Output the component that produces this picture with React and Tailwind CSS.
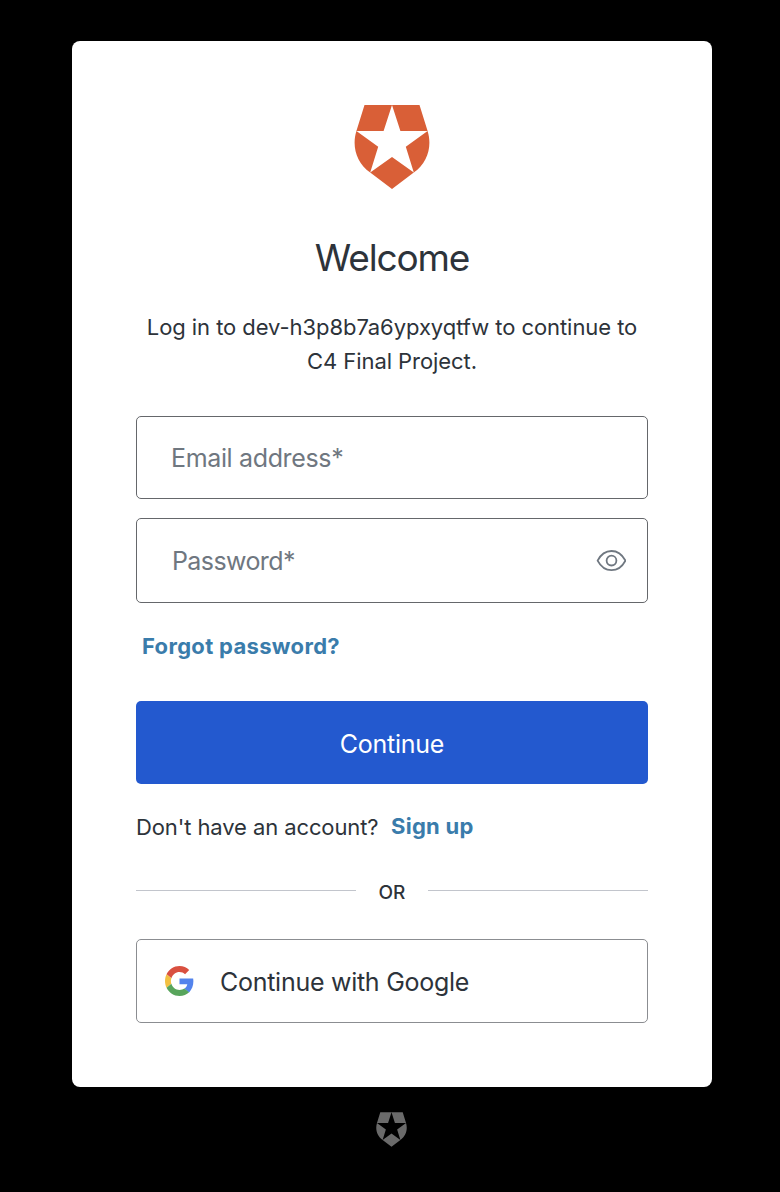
function Shield({ className }) {
  return (
    <svg viewBox="0 0 76 84" className={className} fill="currentColor" aria-hidden="true">
      <path d="M10.5 0H38L29.6 26H2.4ZM38 0H65.5L73.6 26H46.4ZM2.4 26L24.2 41.7L16.2 67.6C2.5 57.8-2.4 41.5 2.4 26ZM73.6 26L51.8 41.7L59.8 67.6C73.5 57.8 78.4 41.5 73.6 26ZM38 52L59.8 67.6L38 84L16.2 67.6Z" />
    </svg>
  );
}

function EyeIcon() {
  return (
    <svg viewBox="0 0 30 22" className="h-[22px] w-[30px]" fill="none" stroke="#6f7780" strokeWidth="1.8" aria-hidden="true">
      <path d="M1.600 10.600C5.100 4 9.500 1 15.500 1S25.900 4 29.400 10.600C25.900 17.200 21.500 20.200 15.500 20.200S5.100 17.200 1.600 10.600Z" strokeLinejoin="round" />
      <circle cx="15.5" cy="10.6" r="4.9" />
    </svg>
  );
}

function GoogleIcon() {
  return (
    <svg viewBox="0 0 48 48" className="h-[30px] w-[29px]" preserveAspectRatio="none" aria-hidden="true">
      <path fill="#d95040" d="M24 9.500c3.540 0 6.710 1.220 9.210 3.600l6.850-6.850C35.900 2.380 30.470 0 24 0 14.620 0 6.510 5.380 2.560 13.220l7.980 6.190C12.430 13.720 17.740 9.500 24 9.500z" />
      <path fill="#5383ec" d="M46.980 24.550c0-1.570-.15-3.090-.38-4.550H24v9.020h12.940c-.58 2.960-2.260 5.480-4.780 7.180l7.730 6c4.510-4.180 7.090-10.360 7.090-17.650z" />
      <path fill="#f2c042" d="M10.530 28.590c-.48-1.450-.76-2.990-.76-4.590s.27-3.140.76-4.590l-7.980-6.190C.92 16.460 0 20.120 0 24s.92 7.540 2.560 10.780l7.970-6.190z" />
      <path fill="#58a55c" d="M24 48c6.480 0 11.930-2.130 15.890-5.810l-7.730-6c-2.150 1.450-4.920 2.300-8.160 2.300-6.260 0-11.570-4.220-13.470-9.910l-7.980 6.190C6.510 42.620 14.620 48 24 48z" />
    </svg>
  );
}

export default function App() {
  return (
    <main className="flex min-h-[1192px] w-full flex-col items-center bg-black pt-[41px] pl-1 font-['Inter',sans-serif] text-[#2d333a]">
      <section className="flex h-[1046px] w-[640px] flex-col rounded-lg bg-white px-16 pt-16">
        <Shield className="h-[84px] w-[76px] shrink-0 self-center text-[#d95f37]" />
        <h1 className="mt-[45px] text-center text-[37px] leading-[48px] tracking-[-1.15px]">Welcome</h1>
        <p className="mt-[28px] text-center text-[22px] leading-[34px] tracking-[-0.06px] whitespace-nowrap">
          Log in to dev-h3p8b7a6ypxyqtfw to continue to
          <br />
          C4 Final Project.
        </p>
        <div className="mt-[38px] flex h-[83px] shrink-0 items-center rounded-[5px] border border-[#65676b] px-[34px] pt-[2px] text-[25px] tracking-[-0.35px] text-[#6f7780]">
          <span>Email address*</span>
        </div>
        <div className="mt-[19px] flex h-[85px] shrink-0 items-center justify-between rounded-[5px] border border-[#65676b] pr-[21px] pl-[35px] text-[25px] tracking-[-0.6px] text-[#6f7780]">
          <span className="pt-[2px]">Password*</span>
          <EyeIcon />
        </div>
        <a className="mt-[26px] ml-[6px] self-start text-[22px] leading-[34px] font-bold tracking-[0.32px] text-[#3a7cab]">Forgot password?</a>
        <button className="mt-[38px] h-[83px] shrink-0 rounded-[5px] bg-[#2359cf] pt-[4px] text-[25px] tracking-[-0.25px] text-white">Continue</button>
        <p className="mt-[26px] flex gap-[12.5px] text-[22px] leading-[34px]">
          <span className="tracking-[-0.1px]">Don't have an account?</span>
          <a className="-mt-px font-bold tracking-[0.25px] text-[#3a7cab]">Sign up</a>
        </p>
        <div className="mt-[33px] flex h-[26px] items-center">
          <span className="h-px w-[220px] bg-[#c2c5cc]" />
          <span className="flex-1 pt-[6px] text-center text-[19px] leading-[26px] font-medium">OR</span>
          <span className="h-px w-[220px] bg-[#c2c5cc]" />
        </div>
        <button className="mt-[36px] flex h-[84px] shrink-0 items-center gap-[26.5px] rounded-[5px] border border-[#8b8d91] pl-[27.5px] text-[25px] tracking-[-0.27px]">
          <GoogleIcon />
          <span className="pt-[4px]">Continue with Google</span>
        </button>
      </section>
      <Shield className="mt-[25px] mr-px h-[35px] w-[31px] text-[#6a6a6a]" />
    </main>
  );
}
